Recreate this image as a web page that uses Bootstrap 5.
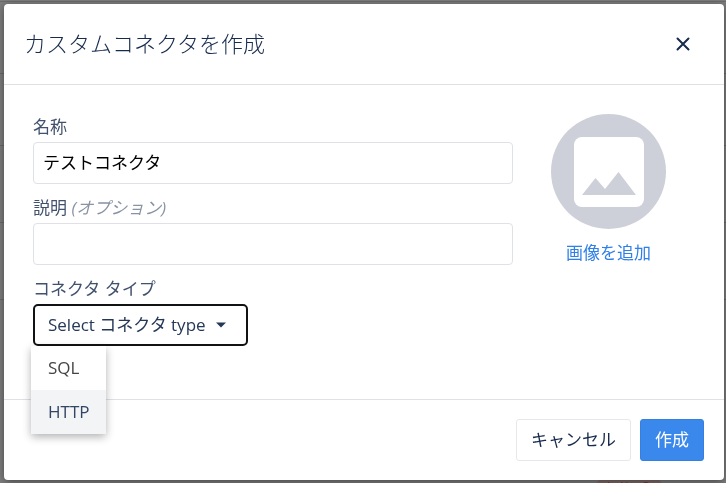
<!DOCTYPE html>
<html lang="ja">
<head>
<meta charset="utf-8">
<meta name="viewport" content="width=device-width, initial-scale=1">
<title>カスタムコネクタを作成</title>
<link href="https://cdn.jsdelivr.net/npm/bootstrap@5.3.0/dist/css/bootstrap.min.css" rel="stylesheet">
<style>
  body { font-family: "Open Sans", "Noto Sans CJK JP", sans-serif; font-size: 17px; line-height: 24px; color: #172b4d; background: #7f7f7f; overflow: hidden; }
  .backdrop-row { height: 77px; border-bottom: 1px solid #6c6c6c; }
  .backdrop-row:first-child { height: 2px; }
  .backdrop-row:nth-child(2), .backdrop-row:nth-child(3) { height: 72px; }
  .status-tag { width: 68px; height: 24px; margin: 178px 63px 0 auto; border-radius: 10px; background: #806a6a; color: #7c1216; font-size: 13px; line-height: 20px; }
  .create-dialog { max-width: none; margin: 4px 2px 3px 4px; }
  .create-dialog .modal-content { min-height: calc(100vh - 7px); border: 0; border-radius: 4px; box-shadow: 0 2px 10px rgba(0,0,0,.45); color: #172b4d; }
  .create-dialog .modal-header { height: 81px; padding: 0 32px 2px 20px; border-color: #dfe1e6; }
  .create-dialog .modal-title { font-size: 22px; line-height: 32px; font-weight: 300; }
  .close-btn { line-height: 0; color: #172b4d; }
  .create-dialog .modal-body { padding: 29px 29px 24px; }
  .form-label { margin-bottom: 2px; line-height: 26px; color: #42526e; }
  .hint { color: #8993a4; }
  .form-control { height: 42px; padding: 0 9px 4px; font-size: 17px; border-color: #dfe1e6; border-radius: 4px; color: #000; }
  .fields { max-width: 480px; }
  .field-row { margin-bottom: 11px; }
  .avatar-box { width: 115px; margin-right: 29px; }
  .image-link { color: #2f80e8; }
  .type-btn { height: 42px; padding: 0 18px 0 13px; font-size: 17px; border: 2px solid #101214; border-radius: 5px; color: #253858; }
  .type-menu { top: 100%; left: -2px; min-width: 75px; padding: 0; border: 0; border-radius: 0 0 2px 2px; font-size: 17px; box-shadow: 0 3px 9px rgba(0,0,0,.3); }
  .type-menu .dropdown-item { padding: 10px 16px 10px 17px; color: #444; }
  .type-menu .dropdown-item.hovered { background: #f3f4f6; color: #344563; }
  .create-dialog .modal-footer { height: 81px; padding: 0 20px; gap: 9px; border-color: #dfe1e6; }
  .footer-btn { height: 42px; padding: 0 14px; margin: 0; font-size: 17px; border-radius: 3px; }
  .cancel-btn { border-color: #e6e8eb; color: #172b4d; }
  .create-btn, .create-btn:hover { background: #3b88ec; border-color: #3480e2; color: #fff; }
</style>
<script src="https://cdn.jsdelivr.net/npm/bootstrap@5.3.0/dist/js/bootstrap.bundle.min.js"></script>
</head>
<body>
<div aria-hidden="true">
  <div class="backdrop-row"></div>
  <div class="backdrop-row"></div>
  <div class="backdrop-row"></div>
  <div class="backdrop-row"></div>
  <div class="backdrop-row"></div>
  <div class="status-tag d-flex justify-content-center gap-2">
    <span>無効</span>
    <svg class="mt-1" width="14" height="14" viewBox="0 0 14 14" fill="none" stroke="currentColor" stroke-width="1.5"><circle cx="7" cy="7" r="6"/><path d="M7 6v4M7 3.5v1"/></svg>
  </div>
</div>
<div class="modal d-block" role="dialog" aria-modal="true" aria-labelledby="dialog-title">
  <div class="modal-dialog create-dialog">
    <form class="modal-content">
      <header class="modal-header d-flex align-items-center justify-content-between">
        <h1 class="modal-title" id="dialog-title">カスタムコネクタを作成</h1>
        <button type="button" class="btn p-0 border-0 close-btn" aria-label="閉じる">
          <svg width="18" height="20" viewBox="0 -1 18 20" fill="none" stroke="currentColor" stroke-width="2" stroke-linecap="round"><path d="M3.5 4.5 14.5 15.5M14.5 4.5 3.5 15.5"/></svg>
        </button>
      </header>
      <div class="modal-body d-flex justify-content-between align-items-start">
        <div class="fields flex-grow-1">
          <div class="field-row">
            <label class="form-label d-block" for="connector-name">名称</label>
            <input type="text" class="form-control" id="connector-name" value="テストコネクタ">
          </div>
          <div class="field-row">
            <label class="form-label d-block" for="connector-desc">説明 <em class="hint">(オプション)</em></label>
            <input type="text" class="form-control" id="connector-desc">
          </div>
          <label class="form-label d-block" for="connector-type">コネクタ タイプ</label>
          <div class="dropdown d-inline-block">
            <button type="button" class="btn type-btn d-flex align-items-center gap-2" id="connector-type" aria-expanded="true">Select コネクタ type
              <svg width="14" height="8" viewBox="0 0 14 8"><path d="M2 1.5h10L7 6.5z" fill="currentColor"/></svg>
            </button>
            <div class="dropdown-menu show type-menu" aria-labelledby="connector-type">
              <button type="button" class="dropdown-item">SQL</button>
              <button type="button" class="dropdown-item hovered">HTTP</button>
            </div>
          </div>
        </div>
        <div class="avatar-box text-center">
          <svg class="d-block mb-2" width="115" height="115" viewBox="0 0 115 115" role="img" aria-label="画像">
            <circle cx="57.5" cy="57.5" r="57.5" fill="#cdd0d8"/>
            <rect x="23" y="23" width="70" height="70" rx="8" fill="#fff"/>
            <path d="M31 81 44.5 64 54 75 67.5 58 85 81z" fill="#cdd0d8"/>
          </svg>
          <a href="#" class="image-link d-block pt-1 text-decoration-none">画像を追加</a>
        </div>
      </div>
      <footer class="modal-footer mt-auto">
        <button type="button" class="btn footer-btn cancel-btn">キャンセル</button>
        <button type="submit" class="btn footer-btn create-btn">作成</button>
      </footer>
    </form>
  </div>
</div>
</body>
</html>
